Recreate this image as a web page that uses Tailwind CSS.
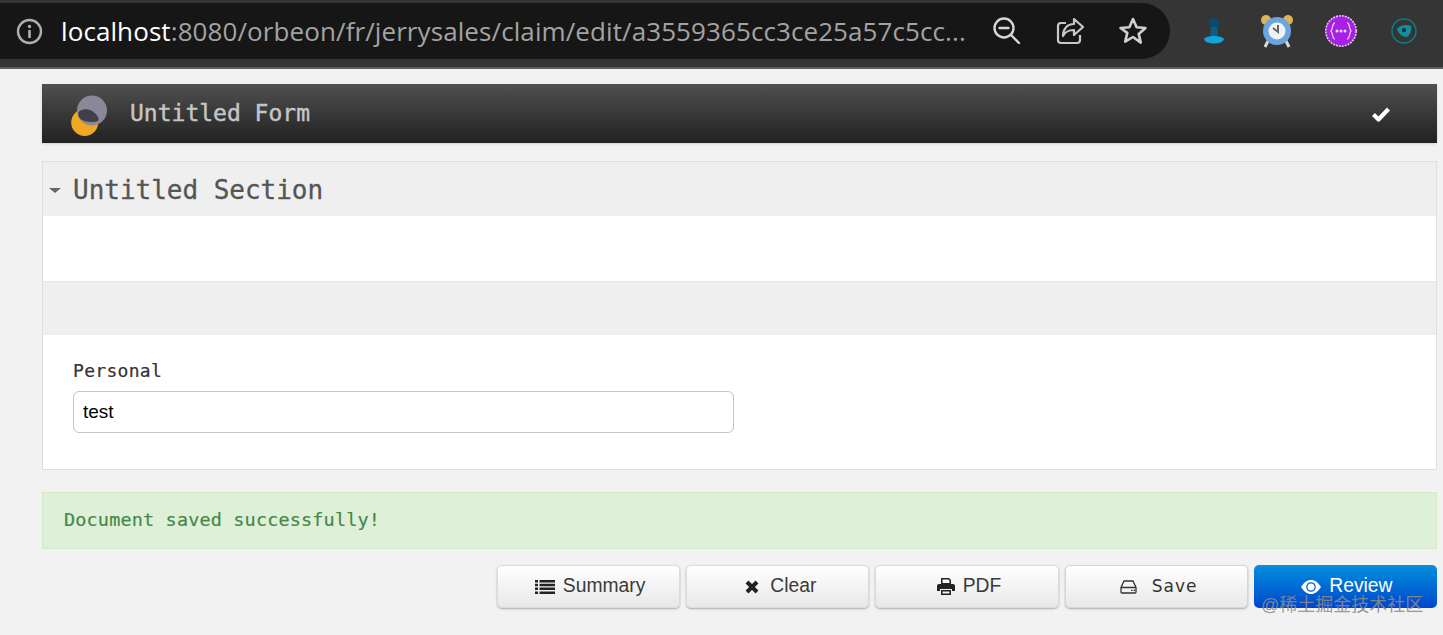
<!DOCTYPE html>
<html lang="en">
<head>
  <meta charset="UTF-8" />
  <title>Untitled Form</title>
  <script src="https://cdn.jsdelivr.net/npm/@tailwindcss/browser@4"></script>
</head>
<body class="relative h-[635px] overflow-hidden bg-[#f2f2f2] font-['Liberation_Sans',sans-serif]">
  <!-- browser toolbar -->
  <header class="flex h-[69px] items-start bg-[#353535] border-b-2 border-[#5e5e5e]">
    <div class="mt-[3px] flex h-[56px] w-[1170px] items-center rounded-r-[28px] bg-[#161616] pl-[16px] pr-[20px]">
      <svg class="w-[27px] h-[27px] shrink-0" viewBox="0 0 27 27" fill="none">
        <circle cx="13.5" cy="13.5" r="11.5" stroke="#aeaeae" stroke-width="2.4"/>
        <circle cx="13.5" cy="8.5" r="1.7" fill="#aeaeae"/>
        <rect x="12.2" y="12" width="2.6" height="8" fill="#aeaeae"/>
      </svg>
      <div class="ml-[18px] w-[908px] shrink-0 whitespace-nowrap font-['Open_Sans',sans-serif] text-[26px] tracking-[0.09px] text-[#a3a3a3]"><span class="text-white">localhost</span>:8080/orbeon/fr/jerrysales/claim/edit/a3559365cc3ce25a57c5cc...</div>
      <svg class="ml-[23px] w-[30px] h-[30px] shrink-0" viewBox="0 0 30 30" fill="none" stroke="#d6d6d6" stroke-width="2.4">
        <circle cx="12" cy="12" r="9.5"/>
        <path d="M7.5 12h9M19 19l8 8" stroke-linecap="round"/>
      </svg>
      <svg class="ml-[33px] w-[30px] h-[30px] shrink-0" viewBox="0 0 30 30" fill="none" stroke="#c8c8c8" stroke-width="2.2" stroke-linejoin="round">
        <path d="M11 7H6a3 3 0 0 0-3 3v14a3 3 0 0 0 3 3h16a3 3 0 0 0 3-3v-5"/>
        <path d="M19 3l9 8-9 8v-5c-6 0-9 2-11 6 0-7 4-12 11-12z"/>
      </svg>
      <svg class="ml-[33px] w-[30px] h-[30px] shrink-0" viewBox="0 0 30 30" fill="none" stroke="#d0d0d0" stroke-width="2.6" stroke-linejoin="round">
        <path d="M15 3l3.6 8.2 8.9.8-6.8 5.9 2.1 8.7L15 21l-7.8 4.6 2.1-8.7L2.5 12l8.9-.8z"/>
      </svg>
    </div>
    <div class="ml-[31px] mt-[14px] flex items-center">
      <svg class="w-[26px] h-[32px]" viewBox="0 0 26 32">
        <circle cx="13" cy="8" r="5.500" fill="#0b4a68"/>
        <path d="M10 12h6l1 9H9z" fill="#0a5f88"/>
        <path d="M3 24c2-4 18-4 20 0-1 6-19 6-20 0z" fill="#13a4d8"/>
      </svg>
      <svg class="ml-[33px] w-[34px] h-[34px]" viewBox="0 0 34 34">
        <circle cx="6" cy="6" r="5" fill="#dcb458"/><circle cx="28" cy="6" r="5" fill="#dcb458"/>
        <path d="M8 27l-3 6M26 27l3 6" stroke="#d8d8d8" stroke-width="3"/>
        <circle cx="17" cy="17" r="14" fill="#6aa5de"/>
        <circle cx="17" cy="17" r="8.5" fill="#eef2f6"/>
        <path d="M18 11v7l-5-4" stroke="#666" stroke-width="2" fill="none"/>
      </svg>
      <svg class="ml-[31px] w-[32px] h-[32px]" viewBox="0 0 32 32">
        <circle cx="16" cy="16" r="15.200" fill="#a81fe6" stroke="#e2c8f2" stroke-width="1.600" stroke-dasharray="2 1"/>
        <path d="M10 8c-3 0-2 6-4 8 2 2 1 8 4 8M22 8c3 0 2 6 4 8-2 2-1 8-4 8" stroke="#eccdfa" stroke-width="1.300" fill="none"/>
        <circle cx="12" cy="16" r="1.500" fill="#f1dcfb"/><circle cx="16" cy="16" r="1.500" fill="#f1dcfb"/><circle cx="20" cy="16" r="1.500" fill="#f1dcfb"/>
      </svg>
      <svg class="ml-[34px] w-[26px] h-[26px]" viewBox="0 0 26 26">
        <circle cx="13" cy="13" r="12" fill="none" stroke="#0b7f86" stroke-width="1.400"/>
        <path d="M6 11c3-4 10-5 14-3 1 4-1 10-5 11-4 0-8-4-9-8z" fill="#148f99"/>
        <circle cx="13" cy="12" r="2.200" fill="#0b3b55"/>
      </svg>
    </div>
  </header>

  <main class="ml-[42px] mr-[6px] mt-[15px]">
    <!-- form title bar -->
    <div class="flex h-[59px] items-center bg-gradient-to-b from-[#505050] to-[#222222] pl-[28px] pr-[46px] shadow-sm">
      <svg class="w-[38px] h-[44px] shrink-0" viewBox="0 0 38 44">
        <circle cx="14.700" cy="30.500" r="13.500" fill="#efa824"/>
        <circle cx="22" cy="18.500" r="15" fill="#8a8798"/>
        <path d="M8.500 20.500C11 16.500 18 16.500 22 19 26 21.500 29 25.500 28.500 28.500 23 31.500 15 29.500 11 27.500 9 26 8 23.500 8.500 20.500z" fill="#403e49"/>
      </svg>
      <span class="ml-[22px] font-['DejaVu_Sans_Mono',monospace] text-[23px] leading-none text-[#c6c6c6] [-webkit-text-stroke:0.4px_#c6c6c6]">Untitled Form</span>
      <svg class="ml-auto w-[20px] h-[16px]" viewBox="0 0 20 16">
        <path d="M2.500 8.500l5 5L17.500 3" fill="none" stroke="#fff" stroke-width="4.200" stroke-linejoin="round"/>
      </svg>
    </div>

    <!-- section -->
    <section class="mt-[18px] border border-[#dfdfdf] bg-white">
      <div class="flex h-[54px] items-center bg-[#efefef] pl-[6px] pt-[2px]">
        <span class="h-0 w-0 border-x-[6px] border-t-[5px] border-x-transparent border-t-[#666666]"></span>
        <h2 class="ml-[12px] font-['DejaVu_Sans_Mono',monospace] text-[26px] leading-none tracking-[-0.02px] text-[#555555] [-webkit-text-stroke:0.3px_#555555]">Untitled Section</h2>
      </div>
      <div class="h-[66px] border-b border-[#e8e8e8]"></div>
      <div class="h-[53px] bg-[#efefef]"></div>
      <div class="h-[134px] pl-[30px] pt-[25px]">
        <label class="block font-['DejaVu_Sans_Mono',monospace] text-[18px] leading-[22px] tracking-[0.3px] text-[#333333] [-webkit-text-stroke:0.2px_#333333]">Personal</label>
        <input class="mt-[9px] block h-[42px] w-[661px] rounded-[6px] border border-[#c4c4c4] bg-white px-[9px] text-[19px] text-black outline-none" value="test" />
      </div>
    </section>

    <!-- status message -->
    <div class="mt-[22px] flex h-[57px] items-center border border-[#d6e9c6] bg-[#dff0d8] pb-[2px] pl-[21px] font-['DejaVu_Sans_Mono',monospace] text-[18.500px] tracking-[0.15px] text-[#468847] [-webkit-text-stroke:0.2px_#468847]">Document saved successfully!</div>

    <!-- actions -->
    <div class="ml-auto mt-[16px] grid w-[940px] grid-cols-5 gap-[6px]">
      <button class="flex h-[43px] items-center justify-center rounded-[5px] border border-[#dcdcdc] bg-gradient-to-b from-white to-[#e8e8e8] pl-[3px] text-[19.300px] text-[#3a3a3a] shadow-[0_1px_2px_rgba(0,0,0,0.3)]">
        <svg class="mr-[8px] w-[20px] h-[16px]" viewBox="0 0 20 16" fill="#222222"><path d="M0 1h3v2.500H0zM4.500 1H20v2.500H4.500zM0 4.800h3v2.500H0zM4.500 4.800H20v2.500H4.500zM0 8.600h3v2.500H0zM4.500 8.600H20v2.500H4.500zM0 12.400h3v2.500H0zM4.500 12.400H20v2.500H4.500z"/></svg>
        Summary
      </button>
      <button class="flex h-[43px] items-center justify-center rounded-[5px] border border-[#dcdcdc] bg-gradient-to-b from-white to-[#e8e8e8] pl-[6px] text-[19.300px] text-[#3a3a3a] shadow-[0_1px_2px_rgba(0,0,0,0.3)]">
        <svg class="mr-[11px] w-[14px] h-[14px]" viewBox="0 0 14 14"><path d="M2 2l10 10M12 2L2 12" stroke="#222222" stroke-width="4"/></svg>
        Clear
      </button>
      <button class="flex h-[43px] items-center justify-center rounded-[5px] border border-[#dcdcdc] bg-gradient-to-b from-white to-[#e8e8e8] pl-[4px] text-[19.300px] text-[#3a3a3a] shadow-[0_1px_2px_rgba(0,0,0,0.3)]">
        <svg class="mr-[8px] w-[18px] h-[17px]" viewBox="0 0 18 17" fill="#222222"><path d="M4 0h8l2 2v4H4zM5.500 1.500v3.500h7V2.500l-1-1z" fill-rule="evenodd"/><path d="M2 6h14a2 2 0 0 1 2 2v5h-3v-2H3v2H0V8a2 2 0 0 1 2-2z"/><path d="M4 12h10v5H4zM5.500 13.500v2h7v-2z" fill-rule="evenodd"/></svg>
        PDF
      </button>
      <button class="flex h-[43px] items-center justify-center rounded-[5px] border border-[#d6d6d6] bg-gradient-to-b from-white to-[#e8e8e8] pl-[5px] font-['DejaVu_Sans',sans-serif] text-[17px] tracking-[1px] text-[#333333] shadow-[0_1px_2px_rgba(0,0,0,0.3)]">
        <svg class="mr-[15px] w-[17px] h-[14px]" viewBox="0 0 17 14" fill="none" stroke="#333333" stroke-width="1.300"><path d="M4 1h9l3 6.500V12a1 1 0 0 1-1 1H2a1 1 0 0 1-1-1V7.500zM1 7.500h15"/><path d="M11 10.300h1.500M13.500 10.300H15"/></svg>
        Save
      </button>
      <button class="flex h-[43px] items-center justify-center rounded-[5px] bg-gradient-to-b from-[#0d8fdc] to-[#0044cc] pl-[3px] text-[19.300px] text-white">
        <svg class="mr-[8px] w-[20px] h-[14px]" viewBox="0 0 20 14"><path d="M0 7c3-4.500 6-7 10-7s7 2.500 10 7c-3 4.500-6 7-10 7S3 11.500 0 7z" fill="#fff"/><circle cx="10" cy="7" r="4.800" fill="#0a5ccf"/><circle cx="10" cy="7" r="3.500" fill="#fff"/></svg>
        Review
      </button>
    </div>
  </main>

  <!-- watermark -->
  <div class="absolute left-[1261px] top-[593px] whitespace-nowrap font-['Liberation_Sans','Noto_Sans_CJK_SC',sans-serif] text-[18px] leading-[24px] text-[#8a8a8a]/90">@稀土掘金技术社区</div>
</body>
</html>
